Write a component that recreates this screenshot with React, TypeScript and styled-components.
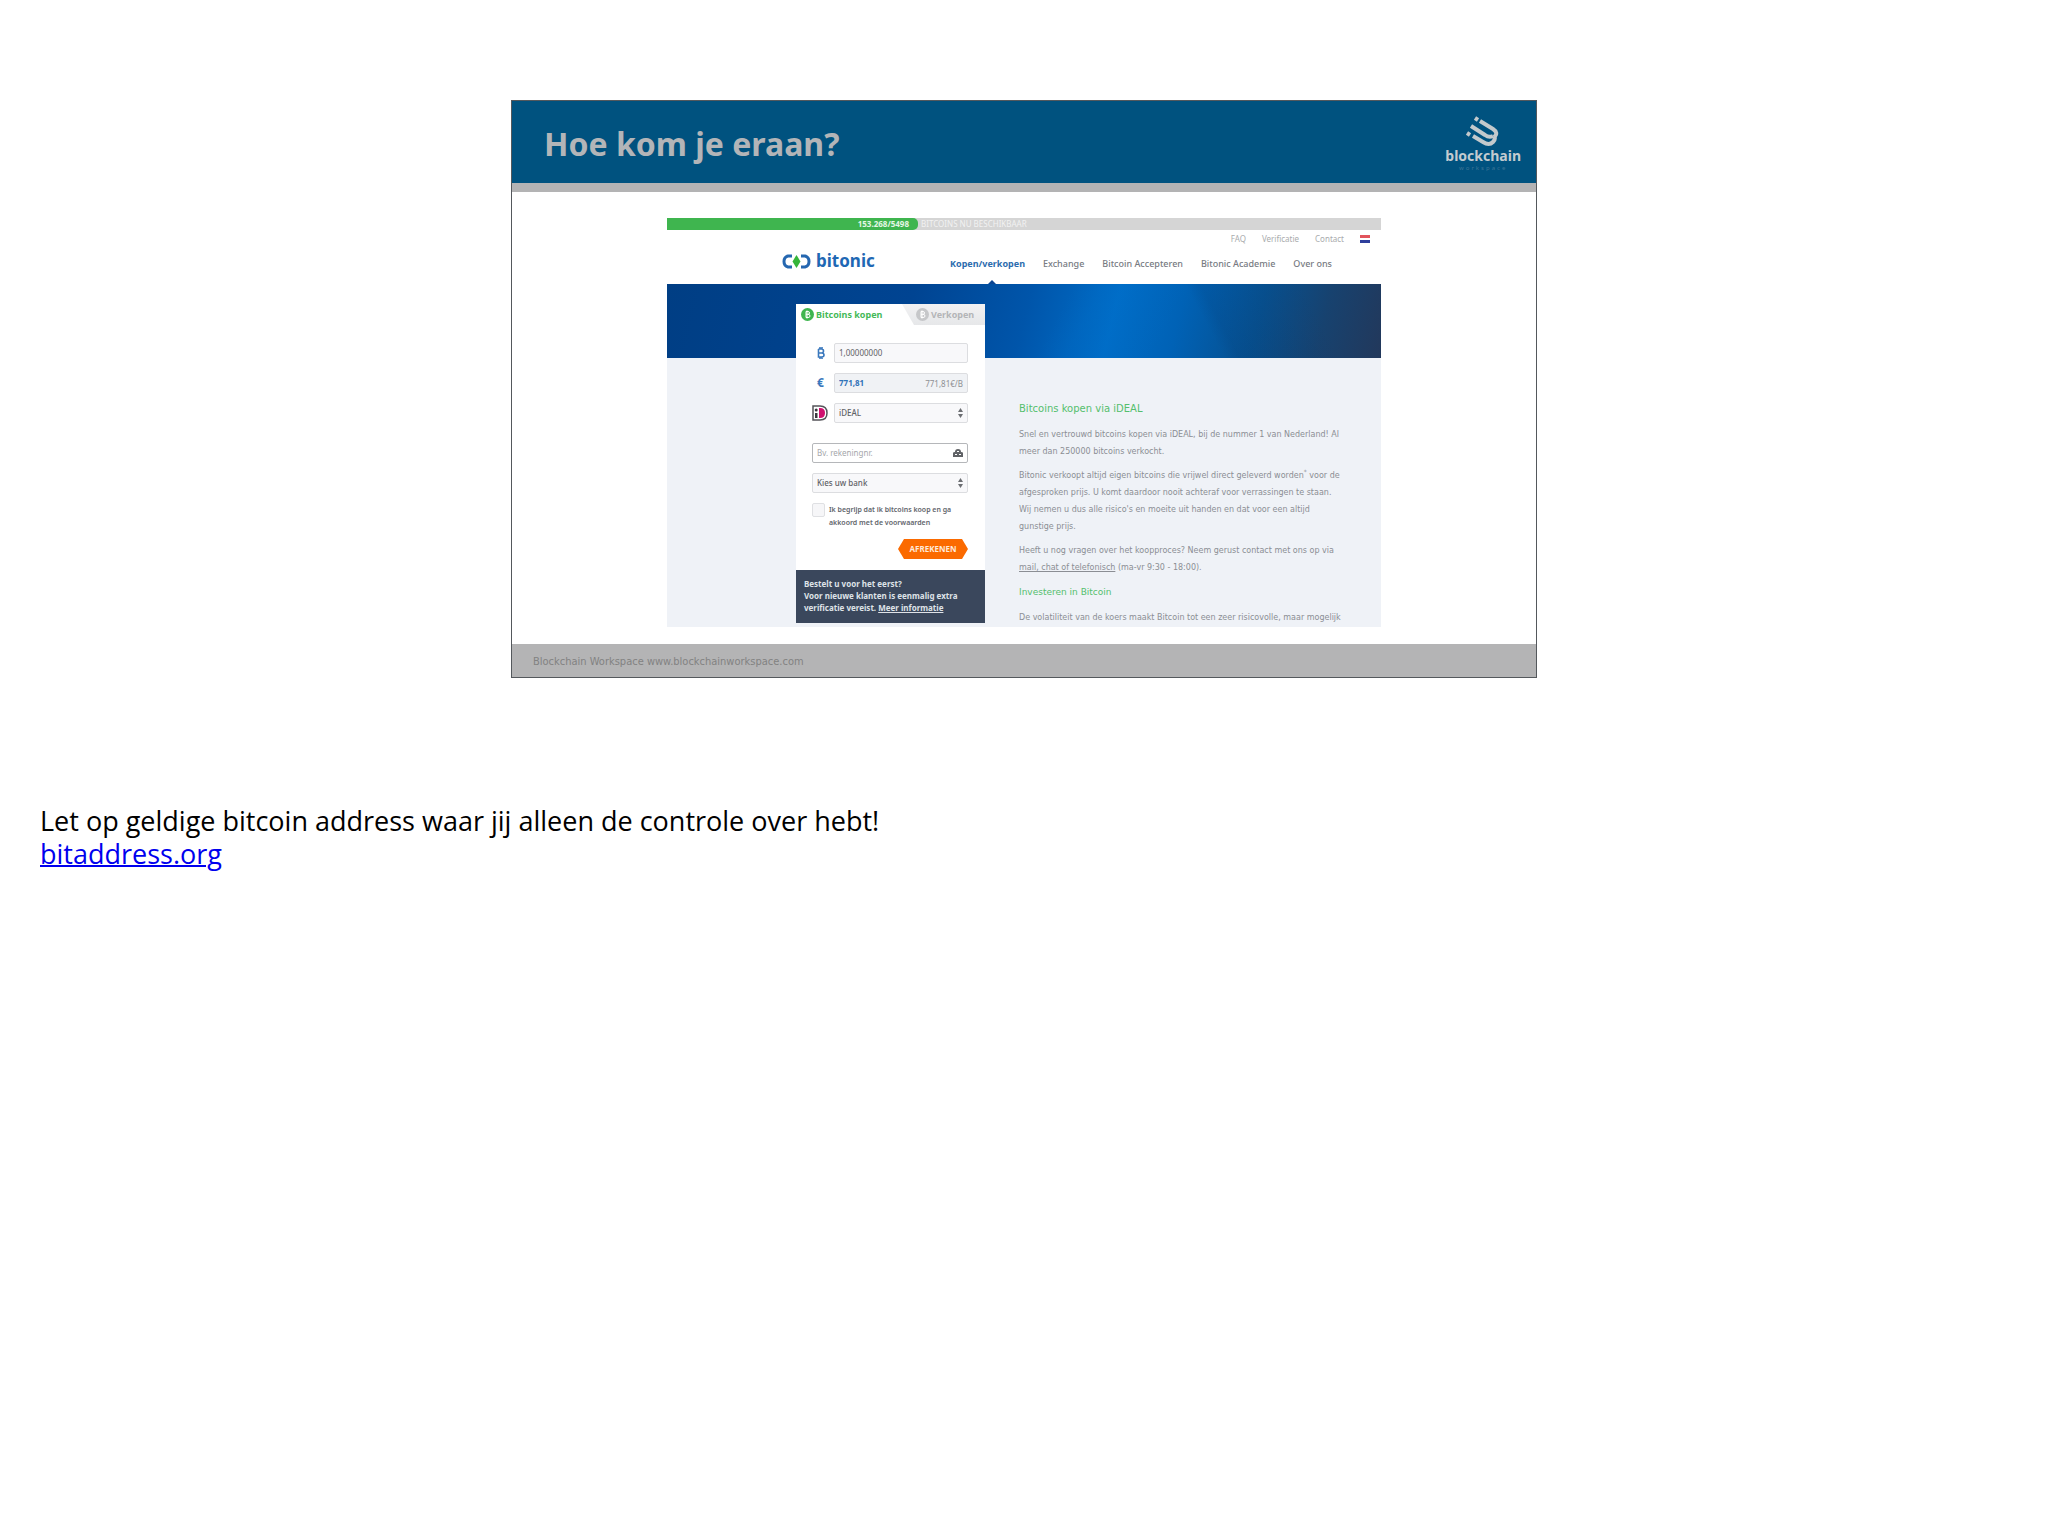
import React from 'react';
import styled, { createGlobalStyle } from 'styled-components';

const Global = createGlobalStyle`
  *, *::before, *::after { box-sizing: border-box; }
  body { margin: 0; background: #fff; }
  p, h1, h2, h3 { margin: 0; }
`;

const siteFont = `"Noto Sans", "Open Sans", sans-serif`;
const slideFont = `"DejaVu Sans Condensed", "DejaVu Sans", sans-serif`;

const Page = styled.main`
  padding: 100px 40px;
`;

const Slide = styled.section`
  max-width: 1026px;
  margin: 0 auto;
  border: 1px solid #54585c;
  background: #fff;
  font-family: ${slideFont};
`;

const SlideHeader = styled.header`
  display: flex;
  justify-content: space-between;
  align-items: center;
  height: 82px;
  padding: 4px 15px 0 32px;
  background: #00527f;
`;

const SlideTitle = styled.h1`
  font: bold 32px/40px ${siteFont};
  color: #b3b5b8;
`;

const Workspace = styled.div`
  display: flex;
  flex-direction: column;
  align-items: center;
  color: #c3cbd0;
`;

const WorkspaceName = styled.span`
  font: bold 14px/16px ${siteFont};
`;

const WorkspaceSub = styled.span`
  font: 6px/8px ${siteFont};
  letter-spacing: 2px;
  color: #3d7496;
`;

const Stripe = styled.div`
  height: 9px;
  background: #b3b3b4;
`;

const SlideBody = styled.div`
  padding: 26px 155px 17px;
`;

const SlideFooter = styled.footer`
  padding: 10px 21px 7px;
  background: #b4b4b5;
  color: #828282;
  font-size: 11px;
  line-height: 16px;
`;

const Site = styled.div`
  font-family: ${siteFont};
  color: #85888d;
`;

const Progress = styled.div`
  display: flex;
  height: 12px;
  background: #d5d5d5;
  font-size: 8px;
  line-height: 12px;
  color: #f2f2f2;
`;

const Sold = styled.strong`
  width: 251px;
  padding-right: 9px;
  border-radius: 0 5px 5px 0;
  background: #3fb54f;
  color: #e4f7e5;
  text-align: right;
`;

const Stock = styled.span`
  padding-left: 3px;
`;

const SiteHeader = styled.div`
  display: flex;
  justify-content: space-between;
  align-items: flex-end;
  padding: 3px 11px 11px 115px;
`;

const Brand = styled.a`
  display: flex;
  align-items: center;
  gap: 5px;
  font-size: 17px;
  line-height: 24px;
  font-weight: bold;
  color: #1f68b4;
  text-decoration: none;
`;

const Menus = styled.div`
  display: flex;
  flex-direction: column;
  gap: 9px;
`;

const TopMenu = styled.nav`
  display: flex;
  justify-content: flex-end;
  align-items: center;
  gap: 16px;
  font-size: 8px;
  line-height: 12px;
`;

const TopLink = styled.a`
  color: #a9abad;
  text-decoration: none;
`;

const MainMenu = styled.nav`
  display: flex;
  gap: 18px;
  padding-right: 38px;
  font-size: 9px;
  line-height: 19px;
`;

const MenuLink = styled.a<{ $active?: boolean }>`
  position: relative;
  color: ${(p) => (p.$active ? '#2c6cae' : '#777b82')};
  font-weight: ${(p) => (p.$active ? 'bold' : 500)};
  text-decoration: none;
  &::after {
    content: '';
    display: ${(p) => (p.$active ? 'block' : 'none')};
    position: absolute;
    top: 26px;
    left: 50%;
    border: 4px solid transparent;
    border-top: 0;
    border-bottom-color: #0a4491;
  }
`;

const Shop = styled.div`
  display: grid;
  grid-template-columns: 129px 189px minmax(0, 1fr);
  align-items: start;
  background:
    linear-gradient(62deg, transparent 74%, rgba(0, 40, 90, 0.1) 76%, transparent 90%) top / 100% 74px no-repeat,
    linear-gradient(118deg, transparent 54%, rgba(0, 130, 225, 0.08) 58%, transparent 70%) top / 100% 74px no-repeat,
    linear-gradient(104deg, #003e84 0%, #004492 34%, #0055aa 50%, #006cc6 62%, #0062b6 71%, #07508f 82%, #17426f 91%, #22385b 100%) top / 100% 74px no-repeat,
    #eff2f7;
`;

const OrderCard = styled.form`
  grid-column: 2;
  margin: 20px 0 4px;
  background: #fff;
`;

const Tabs = styled.div`
  display: flex;
  height: 21px;
`;

const Tab = styled.button<{ $selected?: boolean }>`
  display: flex;
  align-items: center;
  gap: 2px;
  flex: ${(p) => (p.$selected ? '0 0 106px' : '1')};
  padding: 0 0 0 ${(p) => (p.$selected ? 5 : 14)}px;
  border: 0;
  background: ${(p) => (p.$selected ? '#fff' : 'linear-gradient(#f2f2f3, #e6e7e9)')};
  clip-path: ${(p) => (p.$selected ? 'none' : 'polygon(0 0, 100% 0, 100% 100%, 12px 100%)')};
  color: ${(p) => (p.$selected ? '#45b957' : '#b4b5b7')};
  font: bold 9px/12px ${siteFont};
  white-space: nowrap;
`;

const Fields = styled.div`
  display: flex;
  flex-direction: column;
  gap: 10px;
  padding: 18px 17px 11px 16px;
`;

const Field = styled.label<{ $last?: boolean }>`
  display: grid;
  grid-template-columns: 22px minmax(0, 1fr);
  align-items: center;
  margin-bottom: ${(p) => (p.$last ? 10 : 0)}px;
`;

const Symbol = styled.span`
  display: flex;
  color: #3a78bd;
  font-size: 12px;
  line-height: 16px;
  font-weight: bold;
  padding-left: 5px;
`;

const Box = styled.span<{ $tint?: string; $strong?: boolean }>`
  display: flex;
  align-items: center;
  height: 20px;
  padding: 0 4px;
  border: 1px solid ${(p) => (p.$strong ? '#b5b7ba' : '#dcdde0')};
  border-radius: 2px;
  background: ${(p) => p.$tint || '#f8f8fa'};
  color: #8e9094;
  font-size: 8px;
`;

const TextInput = styled.input<{ $blue?: boolean }>`
  flex: 1;
  min-width: 0;
  padding: 0;
  border: 0;
  background: none;
  color: ${(p) => (p.$blue ? '#2f71b8' : '#5f6266')};
  font: ${(p) => (p.$blue ? 'bold' : 'normal')} 8px/16px ${siteFont};
  &::placeholder { color: #a5a7aa; opacity: 1; }
`;

const Choice = styled.select`
  flex: 1;
  min-width: 0;
  padding: 0;
  border: 0;
  appearance: none;
  background: none;
  color: #5f6266;
  font: 500 8px/16px ${siteFont};
`;

const Terms = styled.label`
  display: flex;
  gap: 4px;
  font-size: 7px;
  line-height: 13px;
  font-weight: 600;
  color: #62656c;
`;

const Tick = styled.input`
  appearance: none;
  flex: none;
  width: 13px;
  height: 14px;
  margin: 0;
  border: 1px solid #dfe0e3;
  border-radius: 2px;
  background: #f6f6f8;
`;

const Pay = styled.button`
  align-self: flex-end;
  width: 70px;
  height: 20px;
  padding: 0;
  border: 0;
  background: #fb6a00;
  clip-path: polygon(6px 0, 64px 0, 100% 50%, 64px 100%, 6px 100%, 0 50%);
  color: #ffe9d8;
  font: bold 8px/20px ${siteFont};
`;

const Notice = styled.div`
  padding: 8px 8px 9px;
  background: #3a475c;
  color: #dfe3e8;
  font-size: 8px;
  line-height: 12px;
  font-weight: bold;
  white-space: nowrap;
`;

const Link = styled.a`
  color: inherit;
`;

const Article = styled.article`
  padding: 116px 0 0 34px;
  font-family: "DejaVu Sans", sans-serif;
  font-size: 8px;
  line-height: 17px;
  color: #8b8e94;
`;

const Heading = styled.h2<{ $small?: boolean }>`
  margin-bottom: 8px;
  font-size: ${(p) => (p.$small ? 9 : 10)}px;
  line-height: 18px;
  font-weight: normal;
  color: #55bf6d;
`;

const Para = styled.p`
  margin-bottom: 7px;
  white-space: nowrap;
  &:last-child { margin-bottom: 0; }
`;

const Sup = styled.sup`
  font-size: 6px;
  line-height: 0;
`;

const Notes = styled.section`
  margin-top: 126px;
  color: #000;
  font-family: "Open Sans", "Noto Sans", sans-serif;
  font-size: 27px;
  line-height: 33px;
`;

const NoteLink = styled.a`
  color: #0000ee;
  text-decoration-thickness: 2px;
`;

const WorkspaceMark = () => (
  <svg width="34" height="32" viewBox="0 0 34 32" fill="none" stroke="#c3c9cc" strokeWidth="4" strokeLinejoin="round">
    <path d="M14 5 L27 13 Q33 17 28 21" />
    <path d="M5 10 L19 19 Q23 22 27 20" />
    <path d="M7 20 L17 26 Q23 30 27 26 Q30 23 28 20" />
    <path d="M9 2 L12 4 M1 17 L4 19" />
  </svg>
);

const BitonicMark = () => (
  <svg width="29" height="15" viewBox="0 0 29 15" fill="none">
    <path d="M10 2 H6 Q2 3 2 7.500 Q2 12 6 13 H10 M19 2 H23 Q27 3 27 7.500 Q27 12 23 13 H19" stroke="#2567b0" strokeWidth="3" strokeLinejoin="round" />
    <path d="M14.500 1 L18.500 7.500 L14.500 14 L10.500 7.500 Z" fill="#35b53a" />
  </svg>
);

const Coin = ({ fill }: { fill: string }) => (
  <svg width="13" height="13" viewBox="0 0 13 13" fill="none">
    <circle cx="6.500" cy="6.500" r="6.500" fill={fill} />
    <path d="M5 3.500 H7 Q8.500 3.500 8.500 5 Q8.500 6.300 7 6.300 H5 M7 6.300 Q9 6.300 9 8 Q9 9.500 7 9.500 H5 V3.500 M6 2.500 V10.500" stroke="#fff" strokeWidth="1" />
  </svg>
);

const BitcoinSign = () => (
  <svg width="8" height="14" viewBox="0 0 8 14" fill="none" stroke="#3a78bd" strokeWidth="1.600">
    <path d="M1.500 3 H4.500 Q6.500 3 6.500 5 Q6.500 7 4.500 7 H1.500 M4.500 7 Q7 7 7 9 Q7 11 4.500 11 H1.500 V3 M3 1 V3 M5 1 V3 M3 11 V13 M5 11 V13" />
  </svg>
);

const IdealMark = () => (
  <svg width="16" height="16" viewBox="0 0 16 16">
    <path d="M1 1 H8 Q15 1 15 8 Q15 15 8 15 H1 Z" fill="#fff" stroke="#55545a" strokeWidth="1.500" />
    <path d="M7 3 H8 Q13 3 13 8 Q13 13 8 13 H7 Z" fill="#d0106f" />
    <circle cx="4.200" cy="5" r="1.500" fill="#3a3a3e" />
    <path d="M3 8 H5.500 V13 H3 Z" fill="#3a3a3e" />
  </svg>
);

const Arrows = () => (
  <svg width="5" height="10" viewBox="0 0 5 10" fill="#6c6e72">
    <path d="M2.500 0 L5 4 H0 Z M2.500 10 L5 6 H0 Z" />
  </svg>
);

const ContactMark = () => (
  <svg width="10" height="8" viewBox="0 0 10 8" fill="#606266">
    <path d="M0 8 V4 Q0 3 2 3 Q2 0 5 0 Q8 0 8 3 Q10 3 10 4 V8 Z" />
    <path d="M2 6 H4 V5 H2 Z M6 6 H8 V5 H6 Z M4 3 H6 V2 H4 Z" fill="#fff" />
  </svg>
);

const Flag = () => (
  <svg width="10" height="8" viewBox="0 0 10 8" aria-label="Nederlands">
    <rect width="10" height="3" fill="#e2545c" />
    <rect y="3" width="10" height="2" fill="#fff" />
    <rect y="5" width="10" height="3" fill="#2f3f9c" />
  </svg>
);

const menu = ['Kopen/verkopen', 'Exchange', 'Bitcoin Accepteren', 'Bitonic Academie', 'Over ons'];

export default function App() {
  return (
    <>
      <Global />
      <Page>
        <Slide>
          <SlideHeader>
            <SlideTitle>Hoe kom je eraan?</SlideTitle>
            <Workspace>
              <WorkspaceMark />
              <WorkspaceName>blockchain</WorkspaceName>
              <WorkspaceSub>workspace</WorkspaceSub>
            </Workspace>
          </SlideHeader>
          <Stripe />
          <SlideBody>
            <Site>
              <Progress>
                <Sold>153.268/5498</Sold>
                <Stock>BITCOINS NU BESCHIKBAAR</Stock>
              </Progress>
              <SiteHeader>
                <Brand href="#"><BitonicMark />bitonic</Brand>
                <Menus>
                  <TopMenu>
                    <TopLink href="#">FAQ</TopLink>
                    <TopLink href="#">Verificatie</TopLink>
                    <TopLink href="#">Contact</TopLink>
                    <Flag />
                  </TopMenu>
                  <MainMenu>
                    {menu.map((item, i) => (
                      <MenuLink key={item} href="#" $active={i === 0}>{item}</MenuLink>
                    ))}
                  </MainMenu>
                </Menus>
              </SiteHeader>
              <Shop>
                <OrderCard>
                  <Tabs>
                    <Tab type="button" $selected><Coin fill="#3fb54f" />Bitcoins kopen</Tab>
                    <Tab type="button"><Coin fill="#c6c7c9" />Verkopen</Tab>
                  </Tabs>
                  <Fields>
                    <Field>
                      <Symbol><BitcoinSign /></Symbol>
                      <Box><TextInput aria-label="Bitcoins" defaultValue="1,00000000" /></Box>
                    </Field>
                    <Field>
                      <Symbol>€</Symbol>
                      <Box $tint="#f0f2f5">
                        <TextInput $blue aria-label="Euro" defaultValue="771,81" />
                        771,81€/B
                      </Box>
                    </Field>
                    <Field $last>
                      <IdealMark />
                      <Box>
                        <Choice aria-label="Betaalmethode"><option>iDEAL</option></Choice>
                        <Arrows />
                      </Box>
                    </Field>
                    <Box $strong $tint="#fff">
                      <TextInput aria-label="Rekening" placeholder="Bv. rekeningnr." />
                      <ContactMark />
                    </Box>
                    <Box>
                      <Choice aria-label="Bank"><option>Kies uw bank</option></Choice>
                      <Arrows />
                    </Box>
                    <Terms>
                      <Tick type="checkbox" />
                      <span>Ik begrijp dat ik bitcoins koop en ga<br />akkoord met de voorwaarden</span>
                    </Terms>
                    <Pay type="button">AFREKENEN</Pay>
                  </Fields>
                  <Notice>
                    Bestelt u voor het eerst?<br />
                    Voor nieuwe klanten is eenmalig extra<br />
                    verificatie vereist. <Link href="#">Meer informatie</Link>
                  </Notice>
                </OrderCard>
                <Article>
                  <Heading>Bitcoins kopen via iDEAL</Heading>
                  <Para>
                    Snel en vertrouwd bitcoins kopen via iDEAL, bij de nummer 1 van Nederland! Al<br />
                    meer dan 250000 bitcoins verkocht.
                  </Para>
                  <Para>
                    Bitonic verkoopt altijd eigen bitcoins die vrijwel direct geleverd worden<Sup>*</Sup> voor de<br />
                    afgesproken prijs. U komt daardoor nooit achteraf voor verrassingen te staan.<br />
                    Wij nemen u dus alle risico's en moeite uit handen en dat voor een altijd<br />
                    gunstige prijs.
                  </Para>
                  <Para>
                    Heeft u nog vragen over het koopproces? Neem gerust contact met ons op via<br />
                    <Link href="#">mail, chat of telefonisch</Link> (ma-vr 9:30 - 18:00).
                  </Para>
                  <Heading $small>Investeren in Bitcoin</Heading>
                  <Para>De volatiliteit van de koers maakt Bitcoin tot een zeer risicovolle, maar mogelijk</Para>
                </Article>
              </Shop>
            </Site>
          </SlideBody>
          <SlideFooter>Blockchain Workspace www.blockchainworkspace.com</SlideFooter>
        </Slide>
        <Notes>
          <p>Let op geldige bitcoin address waar jij alleen de controle over hebt!</p>
          <p><NoteLink href="#">bitaddress.org</NoteLink></p>
        </Notes>
      </Page>
    </>
  );
}
